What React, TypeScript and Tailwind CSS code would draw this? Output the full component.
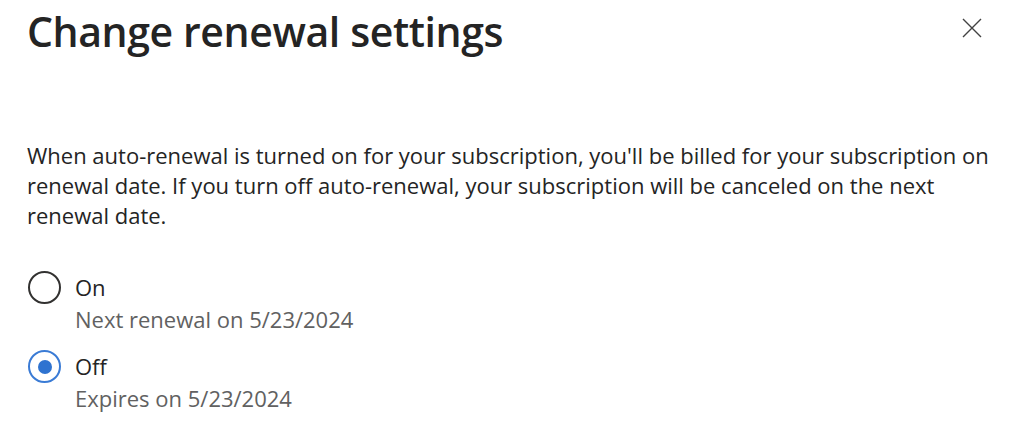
import React from "react";

export default function App() {
  const font = { fontFamily: '"Open Sans", "Noto Sans", sans-serif' };
  return (
    <div className="w-[1024px] h-[435px] bg-white text-[#242424] overflow-hidden" style={font}>
      <div className="flex items-start justify-between pl-[27px] pr-[42px] pt-[1px]">
        <h1 className="text-[41px] leading-[60px] font-semibold tracking-[-0.4px]">Change renewal settings</h1>
        <button className="mt-[17px] w-[20px] h-[20px] flex items-center justify-center text-[#424242]">
          <svg width="20" height="20" viewBox="0 0 20 20" fill="none" stroke="currentColor" strokeWidth="1.4">
            <path d="M1 1 L19 19 M19 1 L1 19" />
          </svg>
        </button>
      </div>
      <p className="mt-[79px] pl-[27px] pr-[20px] text-[22px] leading-[30px]">
        When auto-renewal is turned on for your subscription, you'll be billed for your subscription on
        <br />
        renewal date. If you turn off auto-renewal, your subscription will be canceled on the next
        <br />
        renewal date.
      </p>
      <div className="mt-[41px] pl-[28px] flex flex-col gap-[15px]">
        <div className="flex items-start gap-[14px]">
          <div className="w-[33px] h-[33px] rounded-full border-[2px] border-[#323130] shrink-0" />
          <div className="flex flex-col">
            <span className="text-[22px] leading-[32px]">On</span>
            <span className="text-[22px] leading-[32px] text-[#616161]">Next renewal on 5/23/2024</span>
          </div>
        </div>
        <div className="flex items-start gap-[14px]">
          <div className="w-[33px] h-[33px] rounded-full border-[2px] border-[#3a7bd5] shrink-0 flex items-center justify-center">
            <div className="w-[14px] h-[14px] rounded-full bg-[#2f73d0]" />
          </div>
          <div className="flex flex-col">
            <span className="text-[22px] leading-[32px]">Off</span>
            <span className="text-[22px] leading-[32px] text-[#616161]">Expires on 5/23/2024</span>
          </div>
        </div>
      </div>
    </div>
  );
}
